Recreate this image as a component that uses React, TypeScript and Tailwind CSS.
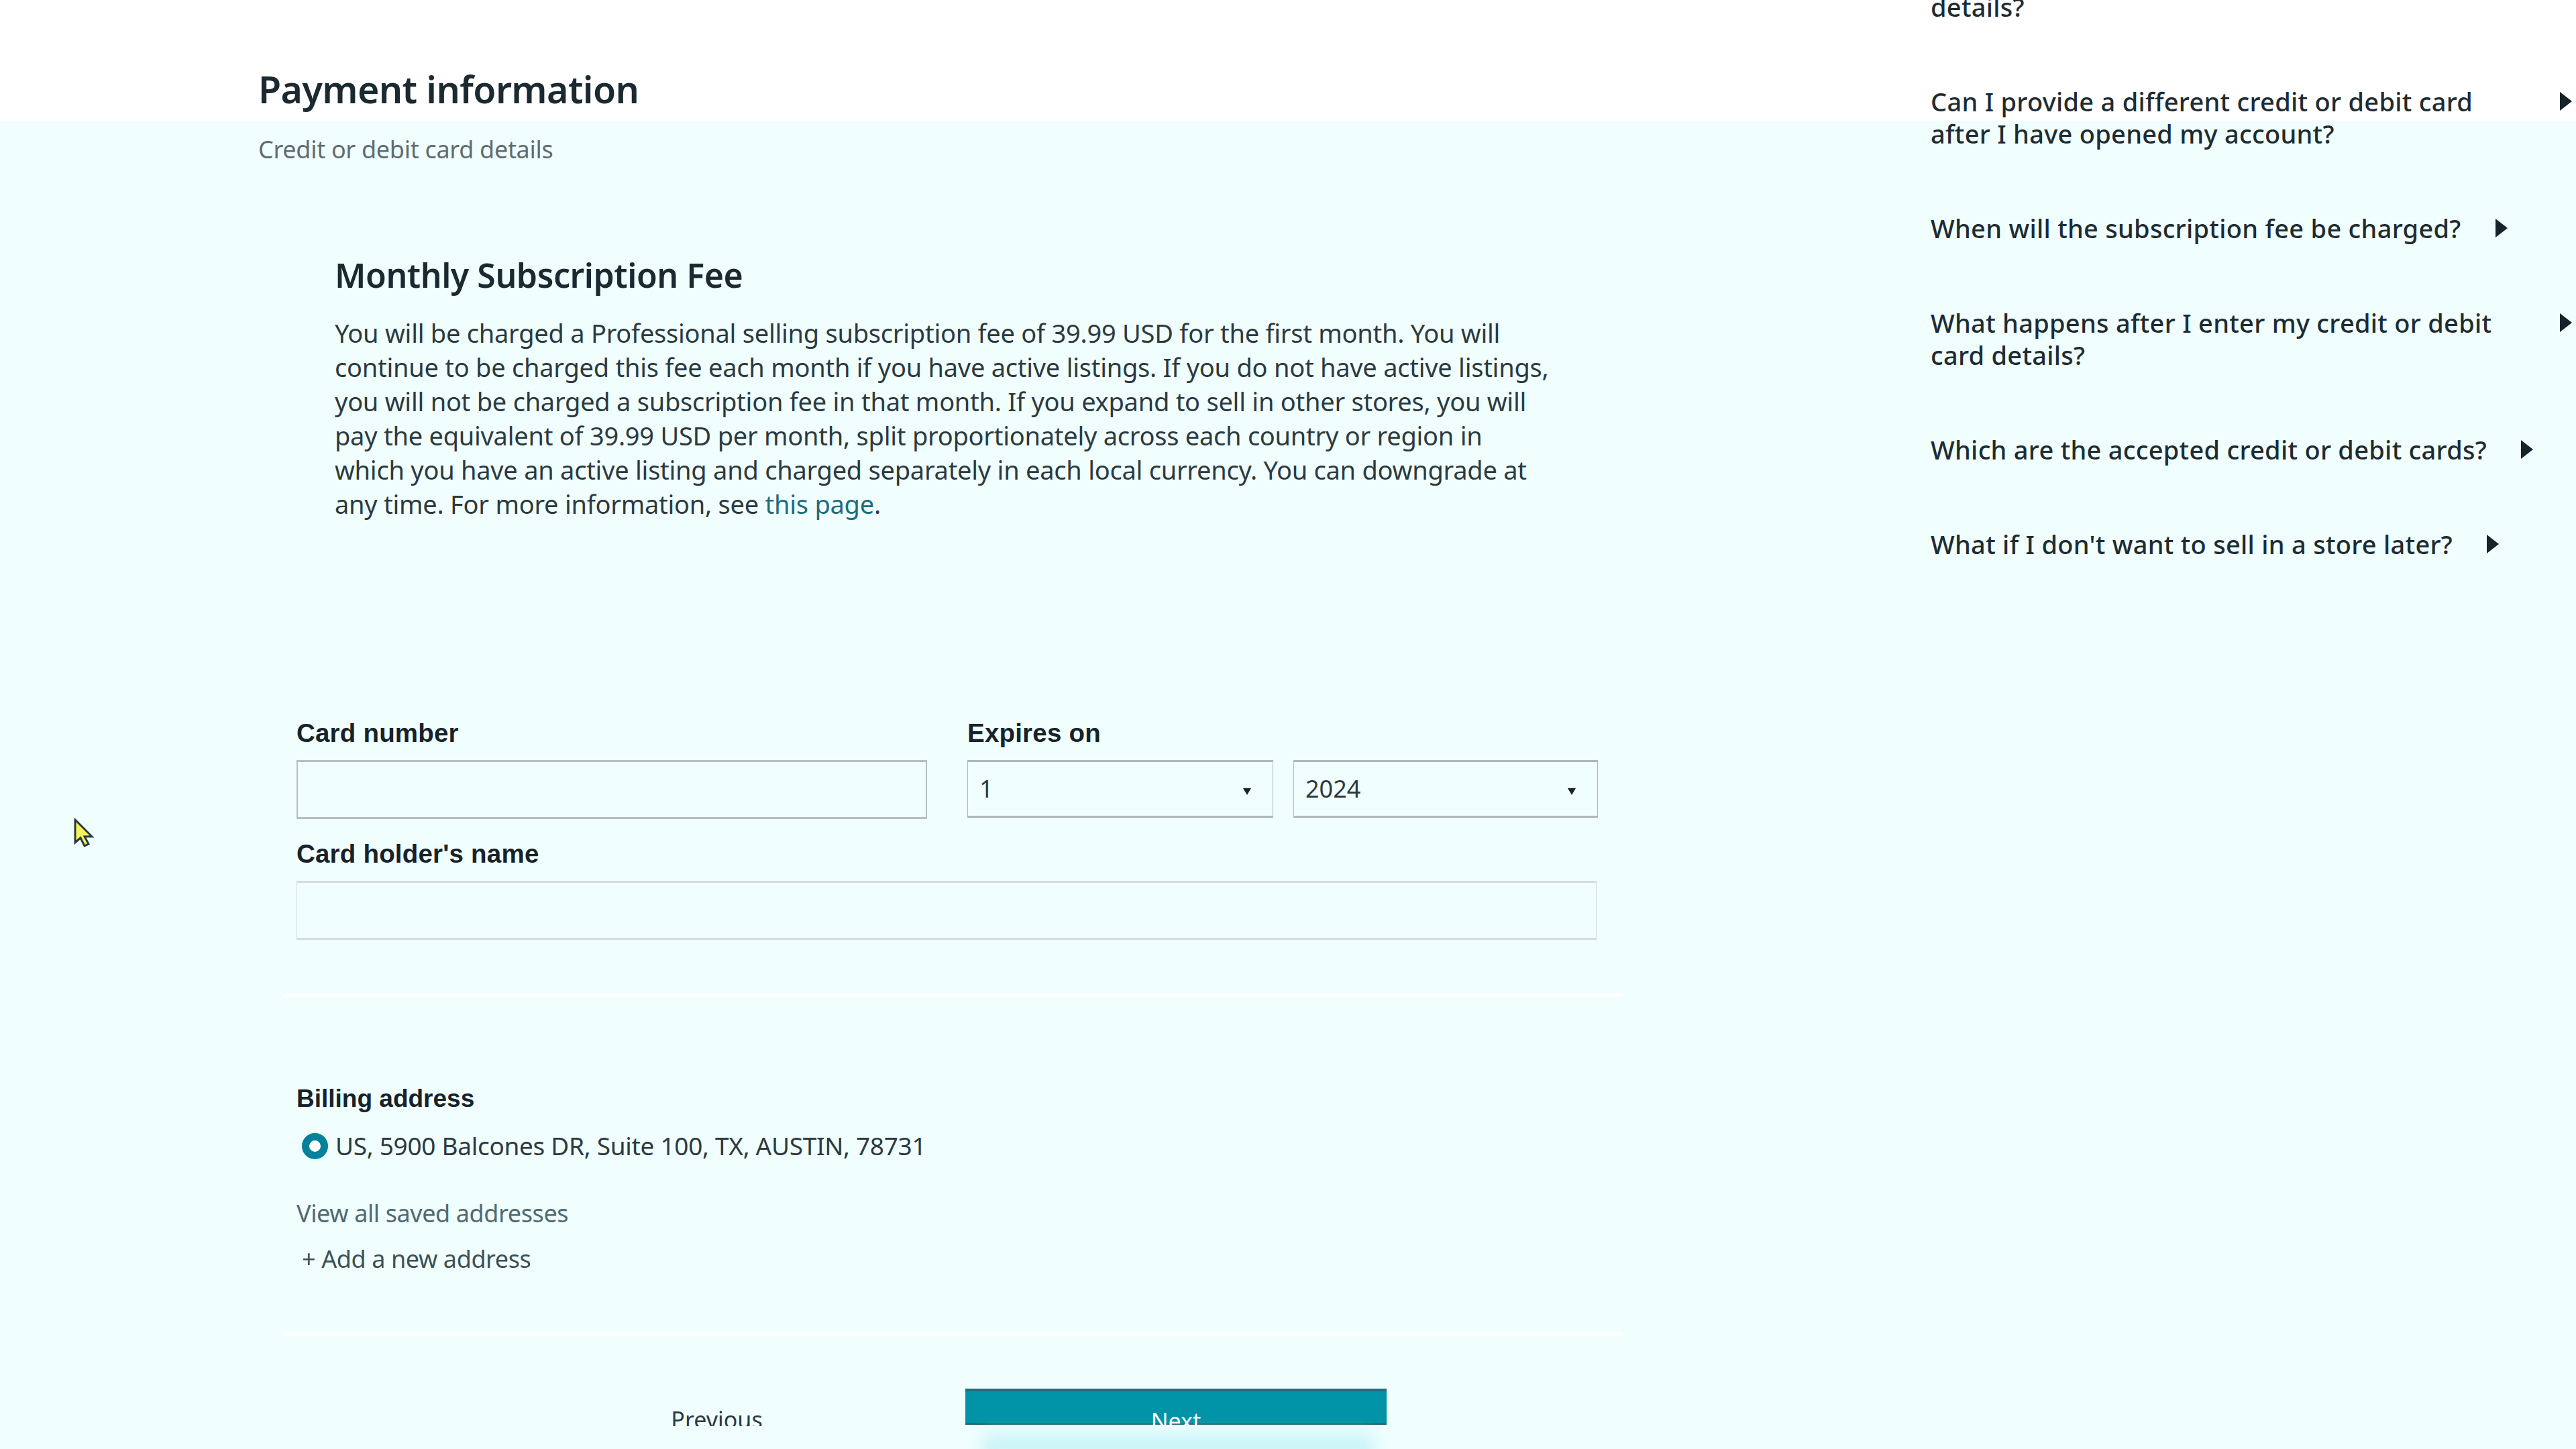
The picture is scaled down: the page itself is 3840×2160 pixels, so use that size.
import React from 'react';

const FAQS = [
  'Can I provide a different credit or debit card after I have opened my account?',
  'When will the subscription fee be charged?',
  'What happens after I enter my credit or debit card details?',
  'Which are the accepted credit or debit cards?',
  "What if I don't want to sell in a store later?",
];

const Caret = () => (
  <svg width="14" height="10" viewBox="0 0 14 10" className="absolute right-[31px] top-[39px]">
    <path d="M1 0h12L7 10z" fill="#16232a" />
  </svg>
);

const Triangle = () => (
  <svg width="18" height="28" viewBox="0 0 18 28" className="shrink-0 mt-[10px]">
    <path d="M0 0l18 14L0 28z" fill="#16232a" />
  </svg>
);

const Label = ({ children }: { children: React.ReactNode }) => (
  <div className="font-['Liberation_Sans'] font-bold text-[38.5px] leading-[44px] text-[#16232a] tracking-[0.2px]">{children}</div>
);

const Select = ({ value, width }: { value: string; width: string }) => (
  <div className={`relative h-[86px] ${width} border border-[#aeb8b8] border-t-[3px] border-b-[3px] flex items-center pl-[17px] text-[36px] text-[#2c3a3f]`}>
    {value}
    <Caret />
  </div>
);

export default function App() {
  return (
    <div className="relative w-[3840px] h-[2160px] overflow-hidden flex bg-[linear-gradient(#ffffff_180px,#f0fefe_180px)] font-['Noto_Sans',sans-serif] text-[#16232a]">
      {/* Mouse pointer */}
      <svg width="30" height="44" viewBox="0 0 30 44" className="absolute left-[110px] top-[1220px]">
        <path d="M2 2v34l8-7 6 12 6-3-6-11h11z" fill="#f4f45a" stroke="#2b3a40" strokeWidth="3" />
      </svg>

      <main className="w-[2878px] shrink-0 pl-[385px] pt-[99px]">
        <h1 className="text-[55.5px] leading-[68px] font-semibold tracking-[-0.6px] text-[#1a2a30]">Payment information</h1>
        <p className="mt-[34px] text-[36px] leading-[44px] text-[#5f6c70] tracking-[-0.3px]">Credit or debit card details</p>

        <section className="ml-[114px] mt-[133px] w-[1860px]">
          <h2 className="text-[50px] leading-[64px] font-semibold tracking-[-0.45px] text-[#1a2a30]">Monthly Subscription Fee</h2>
          <p className="mt-[29px] text-[38px] leading-[51px] text-[#2c3a3f] tracking-[-0.25px] whitespace-nowrap">
            You will be charged a Professional selling subscription fee of 39.99 USD for the first month. You will<br />
            continue to be charged this fee each month if you have active listings. If you do not have active listings,<br />
            you will not be charged a subscription fee in that month. If you expand to sell in other stores, you will<br />
            pay the equivalent of 39.99 USD per month, split proportionately across each country or region in<br />
            which you have an active listing and charged separately in each local currency. You can downgrade at<br />
            any time. For more information, see <span className="text-[#1c6e7c]">this page</span>.
          </p>
        </section>

        <form className="ml-[57px] mt-[294px] w-[1940px]">
          <div className="flex">
            <div className="w-[1000px]">
              <Label>Card number</Label>
              <div className="mt-[18px] h-[88px] w-[940px] border-2 border-[#b6c0c0] border-t-[3px] border-b-[3px]" />
            </div>
            <div>
              <Label>Expires on</Label>
              <div className="mt-[18px] flex gap-[30px]">
                <Select value="1" width="w-[456px]" />
                <Select value="2024" width="w-[454px]" />
              </div>
            </div>
          </div>
          <div className="mt-[30px]">
            <Label>Card holder's name</Label>
            <div className="mt-[18px] h-[88px] w-[1938px] border border-[#d4dcdc] border-t-[3px] border-b-[3px]" />
          </div>
          <div className="-ml-[22px] mt-[80px] h-[6px] w-[2000px] bg-white" />

          <div className="mt-[129px]">
            <div className="font-['Liberation_Sans'] font-bold text-[37px] leading-[44px] text-[#16232a]">Billing address</div>
            <div className="mt-[24px] flex items-center gap-[11px] pl-[8px] text-[37px] leading-[48px] text-[#2c3a3f] tracking-[-0.3px]">
              <span className="w-[39px] h-[39px] rounded-full border-[11px] border-[#00829a] bg-white shrink-0" />
              US, 5900 Balcones DR, Suite 100, TX, AUSTIN, 78731
            </div>
            <div className="mt-[53px] text-[36px] leading-[48px] text-[#4f6a70] tracking-[-0.4px]">View all saved addresses</div>
            <div className="mt-[20px] pl-[8px] text-[36px] leading-[48px] text-[#3c5056] tracking-[-0.4px]">+ Add a new address</div>
          </div>
          <div className="-ml-[22px] mt-[84px] h-[6px] w-[2000px] bg-white" />

          <div className="mt-[79px] flex h-[56px] overflow-hidden">
            <div className="w-[997px] pt-[24px] text-center pl-[300px] text-[34px] leading-[44px] text-[#2c3a3f]">
              <span className="inline-block translate-x-[-22px]">Previous</span>
            </div>
            <div className="w-[628px] h-[54px] bg-[#0093a8] border-t-[4px] border-b-[3px] border-[#2b6a78] text-center text-white text-[34px] leading-[60px] pt-[14px]">Next</div>
          </div>
          <div className="ml-[1020px] mt-[10px] h-[40px] w-[590px] rounded-[20px] bg-[#ccf5f8] blur-[10px]" />
        </form>
      </main>

      <aside className="-mt-[14px] text-[38px] leading-[48px] font-medium text-[#1e2c32] tracking-[0.27px]">
        <div>details?</div>
        <ul className="mt-[93px] flex flex-col gap-[93px]">
          {FAQS.map((q) => (
            <li key={q} className="flex w-fit max-w-[956px] gap-[51px]">
              <span>{q}</span>
              <Triangle />
            </li>
          ))}
        </ul>
      </aside>
    </div>
  );
}
